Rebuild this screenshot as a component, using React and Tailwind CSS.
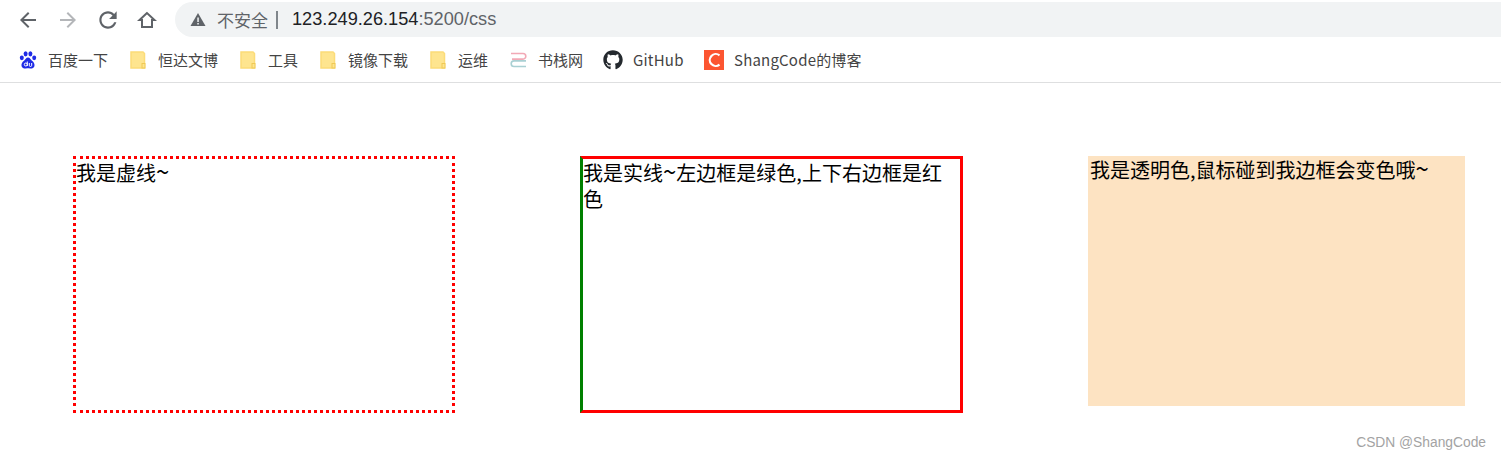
import React from "react";
import { FaGithub } from "react-icons/fa";

const ui = { fontFamily: '"Liberation Sans", "Noto Sans CJK SC", sans-serif' };
const cjk = { fontFamily: '"Noto Sans CJK SC", "Liberation Sans", sans-serif' };

function Nav({ d, size = 24, fill = "#5f6368", className = "" }) {
  return (
    <svg width={size} height={size} viewBox="0 0 24 24" className={`shrink-0 ${className}`}>
      <path d={d} fill={fill} />
    </svg>
  );
}

function Folder() {
  return (
    <svg width="16" height="18" viewBox="0 0 16 18" className="shrink-0">
      <path d="M1 1h12l1.500 1.500V17H1z" fill="#fee58f" stroke="#fbdc78" strokeWidth="1.500" />
      <rect x="12" y="12.500" width="3" height="4.500" fill="#fee58f" stroke="#efc954" strokeWidth="1" />
    </svg>
  );
}

function Paw() {
  return (
    <svg width="18" height="18" viewBox="0 0 18 18" className="shrink-0">
      <ellipse cx="2.800" cy="6.800" rx="2" ry="2.400" fill="#1f2be6" />
      <ellipse cx="6.600" cy="2.800" rx="2" ry="2.600" fill="#1f2be6" />
      <ellipse cx="11.400" cy="2.800" rx="2" ry="2.600" fill="#1f2be6" />
      <ellipse cx="15.200" cy="6.800" rx="2" ry="2.400" fill="#1f2be6" />
      <path d="M9 6.500c-2 0-2.600 2-4 3.200C3.200 11 2 13 2.600 15.200c.5 2 2.900 2.600 4.400 2.300 1.300-.2 2.700-.2 4 0 1.500.3 3.900-.3 4.400-2.300.6-2.200-.6-4.200-2.400-5.500C11.600 8.500 11 6.500 9 6.500z" fill="#1f2be6" />
      <circle cx="6.800" cy="13.500" r="1.500" fill="none" stroke="#fff" strokeWidth="1" />
      <path d="M8.300 10.500v4.500M10.300 12v2.300a1.200 1.200 0 0 0 2.400 0V12" fill="none" stroke="#fff" strokeWidth="1" />
    </svg>
  );
}

function Books() {
  return (
    <svg width="17" height="16" viewBox="0 0 17 16" className="shrink-0">
      <path d="M1 1.500h12a2.800 2.800 0 0 1 0 5.600H2" fill="none" stroke="#f2a9b6" strokeWidth="1.600" />
      <path d="M16 8.900H4a2.800 2.800 0 0 0 0 5.600h12" fill="none" stroke="#a9d0d3" strokeWidth="1.600" />
    </svg>
  );
}

function Csdn() {
  return (
    <div className="w-5 h-5 shrink-0 bg-[#fc5531] flex items-center justify-center">
      <svg width="15" height="16" viewBox="0 0 15 16">
        <path d="M12.500 3.300A6 6 0 1 0 12.500 12.700" fill="none" stroke="#fff" strokeWidth="2.200" />
      </svg>
    </div>
  );
}

function Bookmark({ icon, label, width, tracking = "" }) {
  return (
    <div className={`flex items-center gap-[10px] ${width}`}>
      <div className="w-5 flex justify-center shrink-0">{icon}</div>
      <span className={`text-[15px] text-[#444] whitespace-nowrap ${tracking}`} style={cjk}>{label}</span>
    </div>
  );
}

export default function App() {
  return (
    <div className="w-[1501px] h-[458px] bg-white relative overflow-hidden" style={ui}>
      <header className="h-[83px] border-b border-[#dedfe0] flex flex-col">
        <div className="flex items-start h-[40px] pt-[2px]">
          <div className="flex items-center h-[35px] gap-[16px] pl-[16px] w-[175px]">
            <Nav d="M20 11H7.830l5.590-5.590L12 4l-8 8 8 8 1.410-1.410L7.830 13H20v-2z" />
            <Nav d="M12 4l-1.410 1.410L16.170 11H4v2h12.170l-5.580 5.590L12 20l8-8z" fill="#b4b6b9" />
            <Nav size={26} className="-ml-[1px]" d="M17.650 6.350C16.200 4.900 14.210 4 12 4c-4.420 0-7.990 3.580-7.990 8s3.570 8 7.990 8c3.730 0 6.840-2.550 7.730-6h-2.080c-.82 2.330-3.040 4-5.650 4-3.310 0-6-2.690-6-6s2.690-6 6-6c1.660 0 3.140.69 4.220 1.780L13 11h7V4l-2.350 2.350z" />
            <svg width="20" height="20" viewBox="0 0 20 20" className="shrink-0">
              <path d="M10 3 2.500 10H5v7h10v-7h2.500z" fill="none" stroke="#5f6368" strokeWidth="2" strokeLinejoin="miter" />
            </svg>
          </div>
          <div className="w-[1326px] h-[35px] rounded-l-full bg-[#f1f3f4] flex items-center pl-[15px]">
            <svg width="16" height="15" viewBox="0 0 16 15" className="shrink-0">
              <path d="M8 1 .5 14h15z" fill="#5f6368" />
              <rect x="7.300" y="5.500" width="1.500" height="4.500" fill="#f1f3f4" />
              <rect x="7.300" y="11" width="1.500" height="1.500" fill="#f1f3f4" />
            </svg>
            <span className="ml-[11px] text-[17px] text-[#5f6368]" style={cjk}>不安全</span>
            <span className="ml-[8px] w-[2px] h-[18px] bg-[#80868b]" />
            <span className="ml-[14px] text-[18.2px] text-[#202124]">123.249.26.154</span>
            <span className="text-[18.2px] text-[#5f6368]">:5200/css</span>
          </div>
        </div>
        <div className="flex items-center h-[40px] pl-[18px]">
          <Bookmark icon={<Paw />} label="百度一下" width="w-[110px]" />
          <Bookmark icon={<Folder />} label="恒达文博" width="w-[110px]" />
          <Bookmark icon={<Folder />} label="工具" width="w-[80px]" />
          <Bookmark icon={<Folder />} label="镜像下载" width="w-[110px]" />
          <Bookmark icon={<Folder />} label="运维" width="w-[80px]" />
          <Bookmark icon={<Books />} label="书栈网" width="w-[95px]" />
          <Bookmark icon={<FaGithub size={20} color="#24292e" />} label="GitHub" width="w-[101px]" tracking="tracking-[0.2px]" />
          <Bookmark icon={<Csdn />} label="ShangCode的博客" width="w-[170px]" tracking="tracking-[0.2px]" />
        </div>
      </header>
      <main className="flex items-start gap-[125px] pl-[73px] pt-[73px] text-[20px] leading-[26px] text-black" style={cjk}>
        <div className="w-[382px] h-[257px] border-[3px] border-dotted border-[#ff0000]">我是虚线<span className="text-[24px] leading-none">~</span></div>
        <div className="w-[383px] h-[257px] border-[3px] border-[#ff0000] border-l-[#008000]">我是实线<span className="text-[24px] leading-none">~</span>左边框是绿色,上下右边框是红<br />色</div>
        <div className="w-[377px] h-[250px] bg-[#fde3c2] pl-[2px]">我是透明色,鼠标碰到我边框会变色哦<span className="text-[24px] leading-none">~</span></div>
      </main>
      <div className="absolute right-[15px] top-[433px] text-[13.8px] text-[#a3a3a3]">CSDN @ShangCode</div>
    </div>
  );
}
